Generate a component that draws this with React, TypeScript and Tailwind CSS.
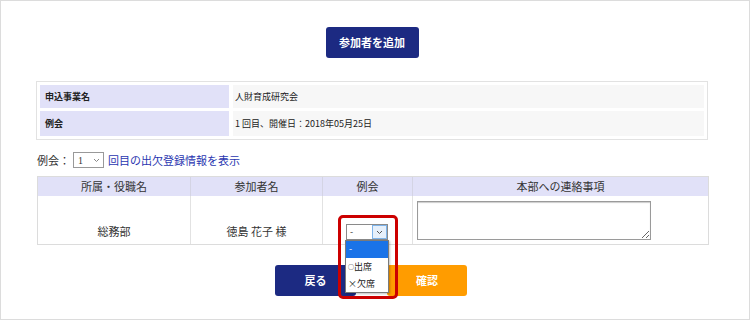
import React from "react";

const font = { fontFamily: '"Noto Sans CJK JP", "Noto Sans", sans-serif' };

function InfoRow({ label, value, h }: { label: string; value: string; h: string }) {
  return (
    <div className={`flex gap-[4px] ${h}`}>
      <div className="flex w-[189px] items-center bg-[#e1e1f8] pl-[5px] text-[9px] font-bold text-[#222]">
        {label}
      </div>
      <div className="flex flex-1 items-center bg-[#f7f7f7] pl-[2px] text-[9px] text-[#222]">
        {value}
      </div>
    </div>
  );
}

export default function App() {
  return (
    <div
      style={font}
      className="relative h-[320px] w-[750px] overflow-hidden border border-[#dcdcdc] bg-white text-[#333]"
    >
      <div className="flex justify-center pr-[6px] pt-[26px]">
        <button className="h-[31px] w-[93px] rounded-[3px] bg-[#1c2a82] text-[11px] font-bold text-white">
          参加者を追加
        </button>
      </div>

      <div className="ml-[35px] mt-[23px] flex w-[672px] flex-col gap-[3px] border border-[#e2e2e2] p-[3px]">
        <InfoRow label="申込事業名" value="人財育成研究会" h="h-[23px]" />
        <InfoRow label="例会" value="1 回目、開催日：2018年05月25日" h="h-[25px]" />
      </div>

      <div className="ml-[36px] mt-[12px] flex h-[16px] items-center text-[11px]">
        <span>例会：</span>
        <div className="ml-[3px] flex h-[16px] w-[31px] items-center justify-between border border-[#999] bg-white pl-[4px] pr-[3px] text-[10px]">
          <span style={{ fontFamily: '"Liberation Serif", serif' }}>1</span>
          <svg width="7" height="5" viewBox="0 0 7 5">
            <path d="M1 1l2.5 2.5L6 1" fill="none" stroke="#888" strokeWidth="1" />
          </svg>
        </div>
        <span className="ml-[4px] text-[#2a36b0]">回目の出欠登録情報を表示</span>
      </div>

      <div className="ml-[36px] mt-[8px] w-[672px] border border-[#dcdcdc]">
        <div className="grid h-[19px] grid-cols-[153px_132px_90px_295px] bg-[#e1e1f8] text-[11px]">
          <div className="flex items-center justify-center border-r border-[#d4d4e4]">所属・役職名</div>
          <div className="flex items-center justify-center border-r border-[#d4d4e4]">参加者名</div>
          <div className="flex items-center justify-center border-r border-[#d4d4e4]">例会</div>
          <div className="flex items-center justify-center">本部への連絡事項</div>
        </div>
        <div className="grid h-[48px] grid-cols-[153px_132px_90px_295px] text-[11px]">
          <div className="flex items-end justify-center border-r border-[#e2e2e2] pb-[5px]">総務部</div>
          <div className="flex items-end justify-center border-r border-[#e2e2e2] pb-[5px]">徳島 花子 様</div>
          <div className="relative border-r border-[#e2e2e2]">
            <div className="absolute left-[23px] top-[28px] flex h-[16px] w-[42px] border border-[#8a8a8a] bg-white">
              <span className="flex-1 pl-[3px] text-[9px] leading-[13px]">-</span>
              <span className="flex w-[15px] items-center justify-center border border-[#7eb4ea] bg-[#e6f0fb]">
                <svg width="7" height="5" viewBox="0 0 7 5">
                  <path d="M1 1l2.5 2.5L6 1" fill="none" stroke="#555" strokeWidth="1" />
                </svg>
              </span>
            </div>
            <div className="absolute left-[22px] top-[44px] z-10 flex w-[44px] flex-col border border-[#7a7a7a] bg-white text-[9px] shadow-[1px_1px_2px_rgba(0,0,0,0.25)]">
              <div className="h-[17px] bg-[#1a73e8] pl-[3px] leading-[15px] text-white">-</div>
              <div className="flex h-[17px] items-center pl-[2px] text-[#222]">
                <span className="text-[6px]">○</span>
                <span>出席</span>
              </div>
              <div className="flex h-[17px] items-center pl-[2px] text-[#222]">
                <span>×欠席</span>
              </div>
            </div>
          </div>
          <div className="pl-[4px] pt-[5px]">
            <textarea className="block h-[39px] w-[234px] border border-[#9a9a9a] shadow-[inset_0_1px_1px_rgba(0,0,0,0.2)]" />
          </div>
        </div>
      </div>

      <div className="mt-[20px] flex justify-center gap-[31px]">
        <button className="ml-[-8px] h-[31px] w-[81px] rounded-[3px] bg-[#1c2a82] text-[11px] font-bold text-white">
          戻る
        </button>
        <button className="h-[31px] w-[80px] rounded-[3px] bg-[#ff9c00] text-[11px] font-bold text-white">
          確認
        </button>
      </div>

      <div className="absolute left-[337px] top-[214px] z-20 h-[84px] w-[60px] rounded-[5px] border-[3px] border-[#cc0000]" />
    </div>
  );
}
